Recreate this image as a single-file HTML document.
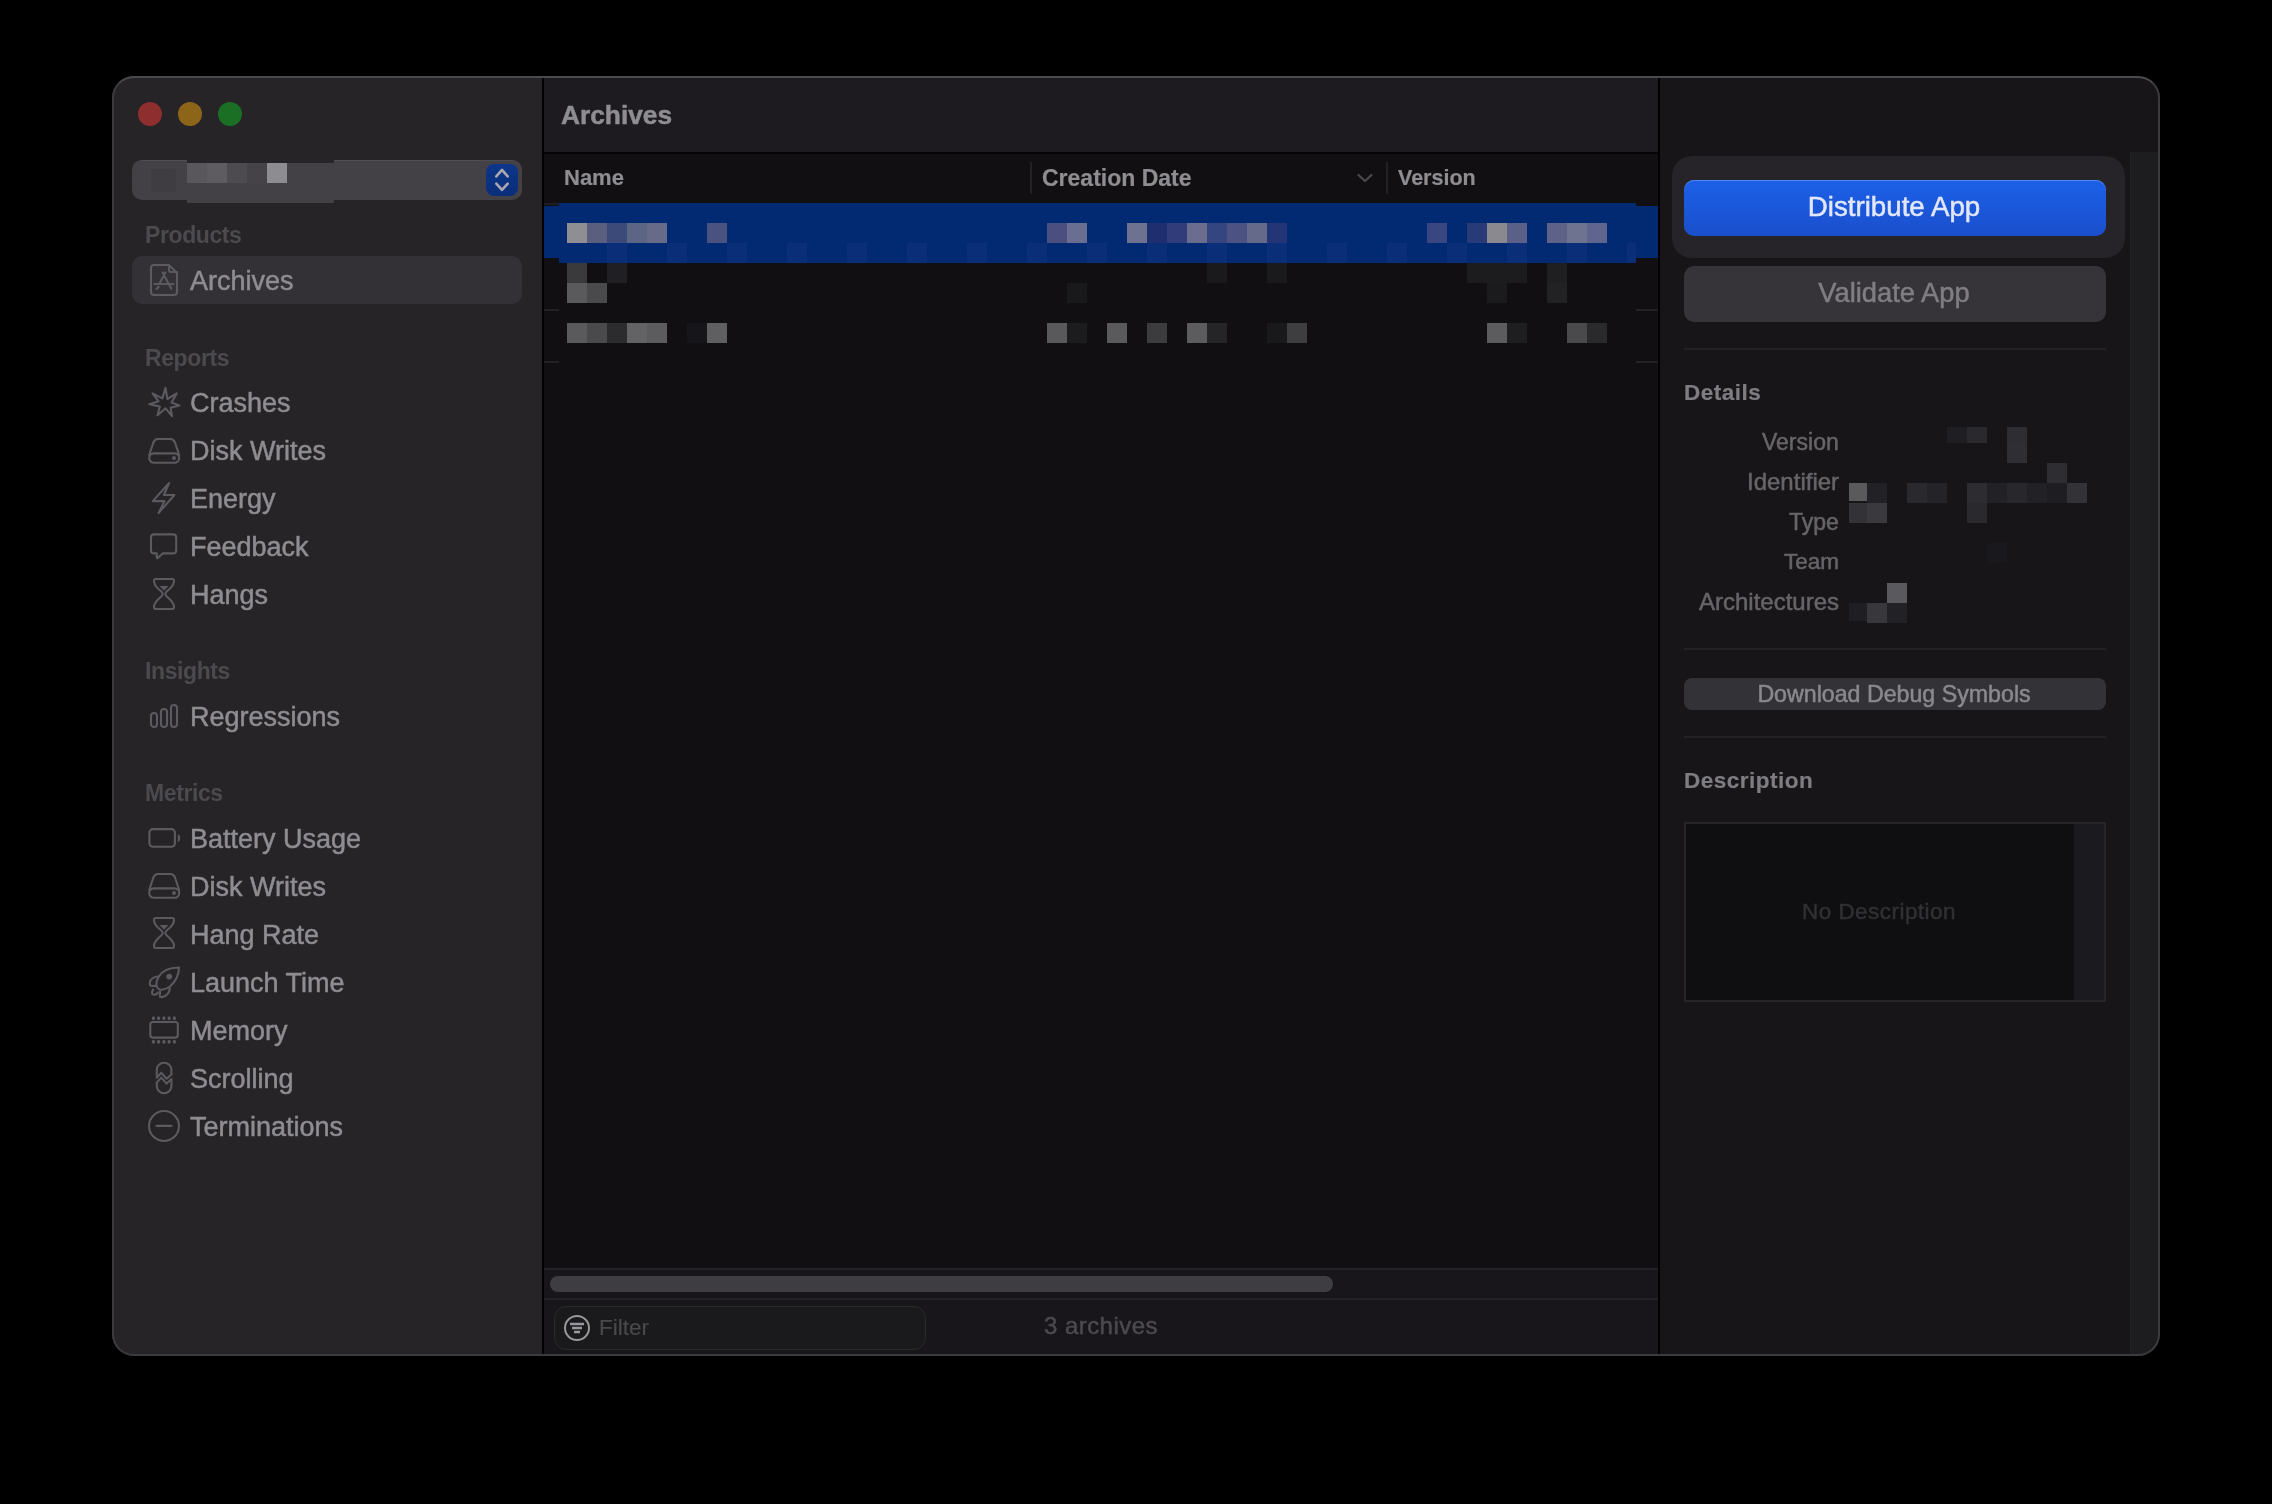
<!DOCTYPE html>
<html><head><meta charset="utf-8">
<style>
*{margin:0;padding:0;box-sizing:border-box}
html,body{width:2272px;height:1504px;background:#000;overflow:hidden;font-family:"Liberation Sans",sans-serif}
.t{position:absolute;white-space:nowrap;line-height:1;will-change:transform}
.r{position:absolute}
svg{position:absolute;overflow:visible}
#win{position:absolute;left:112px;top:76px;width:2048px;height:1280px;border-radius:22px;overflow:hidden;background:#171518}
#win > .inner{position:absolute;left:-112px;top:-76px;width:2272px;height:1504px}
</style></head><body>
<div id="win"><div class="inner">

<div class="r" style="left:112px;top:76px;width:430px;height:1280px;background:#262427;"></div>
<div class="r" style="left:542px;top:76px;width:2px;height:1280px;background:#000;"></div>
<div class="r" style="left:544px;top:76px;width:1114px;height:76px;background:#1d1b1f;"></div>
<div class="r" style="left:544px;top:152px;width:1114px;height:2px;background:#050507;"></div>
<div class="r" style="left:544px;top:154px;width:1114px;height:1114px;background:#110f12;"></div>
<div class="r" style="left:1658px;top:76px;width:2px;height:1280px;background:#000;"></div>
<div class="r" style="left:1660px;top:76px;width:500px;height:1280px;background:#171518;"></div>
<div class="r" style="left:2130px;top:152px;width:30px;height:1204px;background:#1d1c1f;"></div>
<div class="r" style="left:2130px;top:152px;width:1px;height:1204px;background:#222125;"></div>
<div class="r" style="left:138px;top:102px;width:24px;height:24px;border-radius:50%;background:#8f2e2e"></div>
<div class="r" style="left:178px;top:102px;width:24px;height:24px;border-radius:50%;background:#8d6519"></div>
<div class="r" style="left:218px;top:102px;width:24px;height:24px;border-radius:50%;background:#1a6f25"></div>
<div class="r" style="left:132px;top:160px;width:390px;height:40px;border-radius:10px;background:#434145;border-top:1px solid #4f4d52"></div>
<div class="r" style="left:151px;top:169px;width:25px;height:23px;background:#3f3d41;border-radius:2px"></div>
<div class="r" style="left:187px;top:160px;width:147px;height:3px;background:#262427;"></div>
<div class="r" style="left:187px;top:163px;width:147px;height:40px;background:#434145;"></div>
<div class="r" style="left:187px;top:163px;width:20px;height:20px;background:#59575b;"></div>
<div class="r" style="left:207px;top:163px;width:20px;height:20px;background:#5e5c60;"></div>
<div class="r" style="left:227px;top:163px;width:20px;height:20px;background:#4d4b4f;"></div>
<div class="r" style="left:247px;top:163px;width:20px;height:20px;background:#454347;"></div>
<div class="r" style="left:267px;top:163px;width:20px;height:20px;background:#8d8c90;"></div>
<div class="r" style="left:287px;top:163px;width:20px;height:20px;background:#434145;"></div>
<div class="r" style="left:307px;top:163px;width:20px;height:20px;background:#434145;"></div>
<div class="r" style="left:486px;top:164px;width:32px;height:32px;border-radius:8px;background:linear-gradient(#0d358a,#0a2e7a)"></div>
<svg style="left:486px;top:164px" width="32" height="32"><path d="M10.3 12.4 L16 5.9 L21.7 12.4 M10.3 19.6 L16 25.9 L21.7 19.6" fill="none" stroke="#aaa8b0" stroke-width="2.6" stroke-linecap="round" stroke-linejoin="round"/></svg>
<div class="t" style="left:145px;top:224.0px;font-size:23px;color:#4b4a4e;font-weight:700;letter-spacing:-0.4px;">Products</div>
<div class="r" style="left:132px;top:256px;width:390px;height:48px;border-radius:10px;background:#333136"></div>
<div class="t" style="left:145px;top:347.0px;font-size:23px;color:#4b4a4e;font-weight:700;letter-spacing:-0.4px;">Reports</div>
<div class="t" style="left:145px;top:660.0px;font-size:23px;color:#4b4a4e;font-weight:700;letter-spacing:-0.4px;">Insights</div>
<div class="t" style="left:145px;top:782.0px;font-size:23px;color:#4b4a4e;font-weight:700;letter-spacing:-0.4px;">Metrics</div>
<div class="t" style="left:190px;top:268.1px;font-size:27px;color:#8e8d92;font-weight:400;letter-spacing:0px;-webkit-text-stroke:0.5px #8e8d92;">Archives</div>
<svg style="left:148px;top:260px" width="34" height="40"><path d="M6 5 H21 L29 13 V32 Q29 35 26 35 H6 Q3 35 3 32 V8 Q3 5 6 5 Z M21 5 V10 Q21 12 23 12 H29" fill="none" stroke="#5b5a5f" stroke-width="2.1" stroke-linejoin="round" stroke-linecap="round"/><path d="M17.3 12.5 L11.6 23.5 M14.6 12.5 L23.2 28.6 M6.5 24 H25.5 M10.6 26.8 L8.6 29" fill="none" stroke="#5b5a5f" stroke-width="2.1" stroke-linejoin="round" stroke-linecap="round"/></svg>
<div class="t" style="left:190px;top:390.1px;font-size:27px;color:#8e8d92;font-weight:400;letter-spacing:0px;-webkit-text-stroke:0.5px #8e8d92;">Crashes</div>
<svg style="left:148px;top:382px" width="34" height="40"><polygon points="17.5,5.8 19.4,17 28.7,11.4 23.5,20.5 31.4,23.4 22.6,25.7 24,34.2 17.6,26.3 9.5,33.3 11.8,24.6 1.3,22.2 10.6,19.3 4.5,11.4 14.4,16.4" fill="none" stroke="#5b5a5f" stroke-width="2.1" stroke-linejoin="round" stroke-linecap="round"/></svg>
<div class="t" style="left:190px;top:438.1px;font-size:27px;color:#8e8d92;font-weight:400;letter-spacing:0px;-webkit-text-stroke:0.5px #8e8d92;">Disk Writes</div>
<svg style="left:148px;top:430px" width="34" height="40"><path d="M1.2 25 L5.4 12.5 Q6.8 9 10 9 H22.4 Q25.6 9 27 12.5 L31.2 25" fill="none" stroke="#5b5a5f" stroke-width="2.1" stroke-linejoin="round" stroke-linecap="round"/><rect x="1.2" y="23.4" width="30" height="9.4" rx="4.7" fill="none" stroke="#5b5a5f" stroke-width="2.1" stroke-linejoin="round" stroke-linecap="round"/><circle cx="26" cy="28.1" r="2" fill="#5b5a5f"/></svg>
<div class="t" style="left:190px;top:486.1px;font-size:27px;color:#8e8d92;font-weight:400;letter-spacing:0px;-webkit-text-stroke:0.5px #8e8d92;">Energy</div>
<svg style="left:148px;top:478px" width="34" height="40"><path d="M21.1 5 L4.8 23.1 H16.5 L10.6 35 L26.4 17 H15.9 Z" fill="none" stroke="#5b5a5f" stroke-width="2.1" stroke-linejoin="round" stroke-linecap="round"/></svg>
<div class="t" style="left:190px;top:534.1px;font-size:27px;color:#8e8d92;font-weight:400;letter-spacing:0px;-webkit-text-stroke:0.5px #8e8d92;">Feedback</div>
<svg style="left:148px;top:526px" width="34" height="40"><path d="M6 8.4 H25.2 Q28.2 8.4 28.2 11.4 V24.4 Q28.2 27.4 25.2 27.4 H14.7 L10 31.8 Q8.8 32.8 8.8 31 V27.4 H6 Q3 27.4 3 24.4 V11.4 Q3 8.4 6 8.4 Z" fill="none" stroke="#5b5a5f" stroke-width="2.1" stroke-linejoin="round" stroke-linecap="round"/></svg>
<div class="t" style="left:190px;top:582.1px;font-size:27px;color:#8e8d92;font-weight:400;letter-spacing:0px;-webkit-text-stroke:0.5px #8e8d92;">Hangs</div>
<svg style="left:148px;top:574px" width="34" height="40"><path d="M7.5 5 H24.5 Q26 5 26 7 Q26 11 21 15.5 Q17.3 18.5 17.3 20 Q17.3 21.5 21 24.5 Q26 29 26 33 Q26 35 24.5 35 H7.5 Q6 35 6 33 Q6 29 11 24.5 Q14.7 21.5 14.7 20 Q14.7 18.5 11 15.5 Q6 11 6 7 Q6 5 7.5 5 Z" fill="none" stroke="#5b5a5f" stroke-width="2.1" stroke-linejoin="round" stroke-linecap="round"/><path d="M11.6 12 H20.4 L16 16.8 Z" fill="#5b5a5f"/></svg>
<div class="t" style="left:190px;top:704.1px;font-size:27px;color:#8e8d92;font-weight:400;letter-spacing:0px;-webkit-text-stroke:0.5px #8e8d92;">Regressions</div>
<svg style="left:148px;top:695px" width="34" height="40"><rect x="3" y="18" width="6" height="14" rx="3" fill="none" stroke="#5b5a5f" stroke-width="2.1" stroke-linejoin="round" stroke-linecap="round"/><rect x="13" y="14" width="6" height="18" rx="3" fill="none" stroke="#5b5a5f" stroke-width="2.1" stroke-linejoin="round" stroke-linecap="round"/><rect x="23" y="10" width="6" height="22" rx="3" fill="none" stroke="#5b5a5f" stroke-width="2.1" stroke-linejoin="round" stroke-linecap="round"/></svg>
<div class="t" style="left:190px;top:826.1px;font-size:27px;color:#8e8d92;font-weight:400;letter-spacing:0px;-webkit-text-stroke:0.5px #8e8d92;">Battery Usage</div>
<svg style="left:148px;top:817px" width="34" height="40"><rect x="1.4" y="12.1" width="25.5" height="17.6" rx="3.5" fill="none" stroke="#5b5a5f" stroke-width="2.1" stroke-linejoin="round" stroke-linecap="round"/><path d="M29.9 17 Q32.2 18 32.2 21 Q32.2 24 29.9 25.1 Z" fill="#5b5a5f"/></svg>
<div class="t" style="left:190px;top:874.1px;font-size:27px;color:#8e8d92;font-weight:400;letter-spacing:0px;-webkit-text-stroke:0.5px #8e8d92;">Disk Writes</div>
<svg style="left:148px;top:865px" width="34" height="40"><path d="M1.2 25 L5.4 12.5 Q6.8 9 10 9 H22.4 Q25.6 9 27 12.5 L31.2 25" fill="none" stroke="#5b5a5f" stroke-width="2.1" stroke-linejoin="round" stroke-linecap="round"/><rect x="1.2" y="23.4" width="30" height="9.4" rx="4.7" fill="none" stroke="#5b5a5f" stroke-width="2.1" stroke-linejoin="round" stroke-linecap="round"/><circle cx="26" cy="28.1" r="2" fill="#5b5a5f"/></svg>
<div class="t" style="left:190px;top:922.1px;font-size:27px;color:#8e8d92;font-weight:400;letter-spacing:0px;-webkit-text-stroke:0.5px #8e8d92;">Hang Rate</div>
<svg style="left:148px;top:913px" width="34" height="40"><path d="M7.5 5 H24.5 Q26 5 26 7 Q26 11 21 15.5 Q17.3 18.5 17.3 20 Q17.3 21.5 21 24.5 Q26 29 26 33 Q26 35 24.5 35 H7.5 Q6 35 6 33 Q6 29 11 24.5 Q14.7 21.5 14.7 20 Q14.7 18.5 11 15.5 Q6 11 6 7 Q6 5 7.5 5 Z" fill="none" stroke="#5b5a5f" stroke-width="2.1" stroke-linejoin="round" stroke-linecap="round"/><path d="M11.6 12 H20.4 L16 16.8 Z" fill="#5b5a5f"/></svg>
<div class="t" style="left:190px;top:970.1px;font-size:27px;color:#8e8d92;font-weight:400;letter-spacing:0px;-webkit-text-stroke:0.5px #8e8d92;">Launch Time</div>
<svg style="left:148px;top:961px" width="34" height="40"><path d="M31 6.5 C22 6.5 14 10 10.5 16 C7.5 21 8 26 10 27.5 C12 29.5 17 29 22 25.5 C28 20 31 13 31 6.5 Z" fill="none" stroke="#5b5a5f" stroke-width="2.1" stroke-linejoin="round" stroke-linecap="round"/><circle cx="21.2" cy="15.6" r="2.9" fill="#5b5a5f"/><path d="M10.2 15.5 Q4.5 15.8 2.2 20 Q0.6 24.8 4 25 L8.2 24.8 M21.7 27 Q21.8 32 17 35 Q12.3 37.3 11.8 35 L12 30.2" fill="none" stroke="#5b5a5f" stroke-width="2.1" stroke-linejoin="round" stroke-linecap="round"/><path d="M5.2 28.6 Q2.6 32.4 5.4 33.6 Q8.2 34.2 9.8 31.6" fill="none" stroke="#5b5a5f" stroke-width="2.1" stroke-linejoin="round" stroke-linecap="round"/></svg>
<div class="t" style="left:190px;top:1018.1px;font-size:27px;color:#8e8d92;font-weight:400;letter-spacing:0px;-webkit-text-stroke:0.5px #8e8d92;">Memory</div>
<svg style="left:148px;top:1009px" width="34" height="40"><rect x="2.3" y="13" width="27.5" height="15.6" rx="2.5" fill="none" stroke="#5b5a5f" stroke-width="2.1" stroke-linejoin="round" stroke-linecap="round"/><rect x="3.9000000000000004" y="7.4" width="3" height="3.6" rx="1.2" fill="#5b5a5f"/><rect x="3.9000000000000004" y="31" width="3" height="3.6" rx="1.2" fill="#5b5a5f"/><rect x="9.1" y="7.4" width="3" height="3.6" rx="1.2" fill="#5b5a5f"/><rect x="9.1" y="31" width="3" height="3.6" rx="1.2" fill="#5b5a5f"/><rect x="14.4" y="7.4" width="3" height="3.6" rx="1.2" fill="#5b5a5f"/><rect x="14.4" y="31" width="3" height="3.6" rx="1.2" fill="#5b5a5f"/><rect x="19.6" y="7.4" width="3" height="3.6" rx="1.2" fill="#5b5a5f"/><rect x="19.6" y="31" width="3" height="3.6" rx="1.2" fill="#5b5a5f"/><rect x="24.9" y="7.4" width="3" height="3.6" rx="1.2" fill="#5b5a5f"/><rect x="24.9" y="31" width="3" height="3.6" rx="1.2" fill="#5b5a5f"/></svg>
<div class="t" style="left:190px;top:1066.1px;font-size:27px;color:#8e8d92;font-weight:400;letter-spacing:0px;-webkit-text-stroke:0.5px #8e8d92;">Scrolling</div>
<svg style="left:148px;top:1057px" width="34" height="40"><path d="M8.8 20.7 V13 A7.3 7.3 0 0 1 23.4 13 V17.5 L18.6 21.7 L13.3 15.6 Z" fill="none" stroke="#5b5a5f" stroke-width="2.1" stroke-linejoin="round" stroke-linecap="round"/><path d="M8.8 25.5 L13.3 20.6 L18.6 26.6 L23.4 22.2 V29 A7.3 7.3 0 0 1 8.8 29 Z" fill="none" stroke="#5b5a5f" stroke-width="2.1" stroke-linejoin="round" stroke-linecap="round"/></svg>
<div class="t" style="left:190px;top:1114.1px;font-size:27px;color:#8e8d92;font-weight:400;letter-spacing:0px;-webkit-text-stroke:0.5px #8e8d92;">Terminations</div>
<svg style="left:148px;top:1105px" width="34" height="40"><circle cx="16" cy="21" r="15" fill="none" stroke="#5b5a5f" stroke-width="2.1" stroke-linejoin="round" stroke-linecap="round"/><path d="M8.5 20.9 H23.5" fill="none" stroke="#5b5a5f" stroke-width="2.1" stroke-linejoin="round" stroke-linecap="round"/></svg>
<div class="t" style="left:561px;top:101.7px;font-size:26.3px;color:#8e8d91;font-weight:700;letter-spacing:0px;-webkit-text-stroke:0.5px #8e8d91;">Archives</div>
<div class="t" style="left:564px;top:167.4px;font-size:22px;color:#8e8d91;font-weight:700;letter-spacing:0px;-webkit-text-stroke:0.2px #8e8d91;">Name</div>
<div class="t" style="left:1042px;top:166.5px;font-size:23px;color:#8e8d91;font-weight:700;letter-spacing:0px;-webkit-text-stroke:0.2px #8e8d91;">Creation Date</div>
<div class="t" style="left:1398px;top:167.8px;font-size:21.5px;color:#8e8d91;font-weight:700;letter-spacing:0px;-webkit-text-stroke:0.2px #8e8d91;">Version</div>
<div class="r" style="left:1030px;top:162px;width:2px;height:32px;background:#222125;"></div>
<div class="r" style="left:1386px;top:162px;width:2px;height:32px;background:#222125;"></div>
<svg style="left:1356px;top:172px" width="20" height="12"><path d="M2.5 3 L9 9 L15.5 3" fill="none" stroke="#4a494d" stroke-width="2.2" stroke-linecap="round" stroke-linejoin="round"/></svg>
<div class="r" style="left:559px;top:203px;width:1077px;height:60px;background:#022a73;"></div>
<div class="r" style="left:544px;top:206px;width:15px;height:52px;background:#022a73;"></div>
<div class="r" style="left:1636px;top:206px;width:22px;height:52px;background:#022a73;"></div>
<div class="r" style="left:544px;top:203px;width:15px;height:2px;background:#1e1d21;"></div>
<div class="r" style="left:544px;top:309px;width:15px;height:2px;background:#222125;"></div>
<div class="r" style="left:1636px;top:309px;width:22px;height:2px;background:#222125;"></div>
<div class="r" style="left:544px;top:361px;width:15px;height:2px;background:#222125;"></div>
<div class="r" style="left:1636px;top:361px;width:22px;height:2px;background:#222125;"></div>
<div class="r" style="left:567px;top:223px;width:20px;height:20px;background:#8f8e93;"></div>
<div class="r" style="left:587px;top:223px;width:20px;height:20px;background:#5a5f80;"></div>
<div class="r" style="left:607px;top:223px;width:20px;height:20px;background:#3c4a7a;"></div>
<div class="r" style="left:627px;top:223px;width:20px;height:20px;background:#5c6584;"></div>
<div class="r" style="left:647px;top:223px;width:20px;height:20px;background:#676b87;"></div>
<div class="r" style="left:707px;top:223px;width:20px;height:20px;background:#4a5280;"></div>
<div class="r" style="left:1047px;top:223px;width:20px;height:20px;background:#4a4f80;"></div>
<div class="r" style="left:1067px;top:223px;width:20px;height:20px;background:#6a6e90;"></div>
<div class="r" style="left:1127px;top:223px;width:20px;height:20px;background:#6e7190;"></div>
<div class="r" style="left:1147px;top:223px;width:20px;height:20px;background:#1e2e6e;"></div>
<div class="r" style="left:1167px;top:223px;width:20px;height:20px;background:#303d7a;"></div>
<div class="r" style="left:1187px;top:223px;width:20px;height:20px;background:#6a6d8e;"></div>
<div class="r" style="left:1207px;top:223px;width:20px;height:20px;background:#354580;"></div>
<div class="r" style="left:1227px;top:223px;width:20px;height:20px;background:#4c5282;"></div>
<div class="r" style="left:1247px;top:223px;width:20px;height:20px;background:#666a8a;"></div>
<div class="r" style="left:1267px;top:223px;width:20px;height:20px;background:#233477;"></div>
<div class="r" style="left:1427px;top:223px;width:20px;height:20px;background:#3a4680;"></div>
<div class="r" style="left:1467px;top:223px;width:20px;height:20px;background:#283a78;"></div>
<div class="r" style="left:1487px;top:223px;width:20px;height:20px;background:#8a898f;"></div>
<div class="r" style="left:1507px;top:223px;width:20px;height:20px;background:#5a6088;"></div>
<div class="r" style="left:1547px;top:223px;width:20px;height:20px;background:#5e6288;"></div>
<div class="r" style="left:1567px;top:223px;width:20px;height:20px;background:#6e7490;"></div>
<div class="r" style="left:1587px;top:223px;width:20px;height:20px;background:#606590;"></div>
<div class="r" style="left:607px;top:243px;width:20px;height:20px;background:#0a2f78;"></div>
<div class="r" style="left:667px;top:243px;width:20px;height:20px;background:#0a2f78;"></div>
<div class="r" style="left:727px;top:243px;width:20px;height:20px;background:#0a2f78;"></div>
<div class="r" style="left:787px;top:243px;width:20px;height:20px;background:#0a2f78;"></div>
<div class="r" style="left:847px;top:243px;width:20px;height:20px;background:#0a2f78;"></div>
<div class="r" style="left:907px;top:243px;width:20px;height:20px;background:#0a2f78;"></div>
<div class="r" style="left:967px;top:243px;width:20px;height:20px;background:#0a2f78;"></div>
<div class="r" style="left:1027px;top:243px;width:20px;height:20px;background:#0a2f78;"></div>
<div class="r" style="left:1087px;top:243px;width:20px;height:20px;background:#0a2f78;"></div>
<div class="r" style="left:1147px;top:243px;width:20px;height:20px;background:#0a2f78;"></div>
<div class="r" style="left:1207px;top:243px;width:20px;height:20px;background:#0a2f78;"></div>
<div class="r" style="left:1267px;top:243px;width:20px;height:20px;background:#0a2f78;"></div>
<div class="r" style="left:1327px;top:243px;width:20px;height:20px;background:#0a2f78;"></div>
<div class="r" style="left:1387px;top:243px;width:20px;height:20px;background:#0a2f78;"></div>
<div class="r" style="left:1447px;top:243px;width:20px;height:20px;background:#0a2f78;"></div>
<div class="r" style="left:1507px;top:243px;width:20px;height:20px;background:#0a2f78;"></div>
<div class="r" style="left:1567px;top:243px;width:20px;height:20px;background:#0a2f78;"></div>
<div class="r" style="left:1627px;top:243px;width:9px;height:20px;background:#0a2f78;"></div>
<div class="r" style="left:567px;top:263px;width:20px;height:20px;background:#3a393c;"></div>
<div class="r" style="left:607px;top:263px;width:20px;height:20px;background:#201f23;"></div>
<div class="r" style="left:1207px;top:263px;width:20px;height:20px;background:#1a191c;"></div>
<div class="r" style="left:1267px;top:263px;width:20px;height:20px;background:#1a191c;"></div>
<div class="r" style="left:1467px;top:263px;width:20px;height:20px;background:#1c1b1e;"></div>
<div class="r" style="left:1487px;top:263px;width:20px;height:20px;background:#1c1b1e;"></div>
<div class="r" style="left:1507px;top:263px;width:20px;height:20px;background:#1c1b1e;"></div>
<div class="r" style="left:1547px;top:263px;width:20px;height:20px;background:#1f1e21;"></div>
<div class="r" style="left:567px;top:283px;width:20px;height:20px;background:#5a595c;"></div>
<div class="r" style="left:587px;top:283px;width:20px;height:20px;background:#4a494c;"></div>
<div class="r" style="left:1067px;top:283px;width:20px;height:20px;background:#19181b;"></div>
<div class="r" style="left:1487px;top:283px;width:20px;height:20px;background:#1b1a1d;"></div>
<div class="r" style="left:1547px;top:283px;width:20px;height:20px;background:#222124;"></div>
<div class="r" style="left:567px;top:323px;width:20px;height:20px;background:#5a595c;"></div>
<div class="r" style="left:587px;top:323px;width:20px;height:20px;background:#4a494c;"></div>
<div class="r" style="left:607px;top:323px;width:20px;height:20px;background:#2c2b2e;"></div>
<div class="r" style="left:627px;top:323px;width:20px;height:20px;background:#636265;"></div>
<div class="r" style="left:647px;top:323px;width:20px;height:20px;background:#5c5b5e;"></div>
<div class="r" style="left:687px;top:323px;width:20px;height:20px;background:#161519;"></div>
<div class="r" style="left:707px;top:323px;width:20px;height:20px;background:#5f5e61;"></div>
<div class="r" style="left:1047px;top:323px;width:20px;height:20px;background:#59585b;"></div>
<div class="r" style="left:1067px;top:323px;width:20px;height:20px;background:#1c1b1e;"></div>
<div class="r" style="left:1107px;top:323px;width:20px;height:20px;background:#5a595c;"></div>
<div class="r" style="left:1147px;top:323px;width:20px;height:20px;background:#3c3b3e;"></div>
<div class="r" style="left:1187px;top:323px;width:20px;height:20px;background:#5c5b5e;"></div>
<div class="r" style="left:1207px;top:323px;width:20px;height:20px;background:#252427;"></div>
<div class="r" style="left:1267px;top:323px;width:20px;height:20px;background:#19181b;"></div>
<div class="r" style="left:1287px;top:323px;width:20px;height:20px;background:#3e3d40;"></div>
<div class="r" style="left:1487px;top:323px;width:20px;height:20px;background:#5c5b5e;"></div>
<div class="r" style="left:1507px;top:323px;width:20px;height:20px;background:#1e1d20;"></div>
<div class="r" style="left:1567px;top:323px;width:20px;height:20px;background:#4a494c;"></div>
<div class="r" style="left:1587px;top:323px;width:20px;height:20px;background:#2a292c;"></div>
<div class="r" style="left:544px;top:1268px;width:1114px;height:88px;background:#18161a;"></div>
<div class="r" style="left:544px;top:1268px;width:1114px;height:2px;background:#232226;"></div>
<div class="r" style="left:544px;top:1298px;width:1114px;height:2px;background:#232226;"></div>
<div class="r" style="left:550px;top:1276px;width:783px;height:16px;border-radius:8px;background:#3e3d41"></div>
<div class="r" style="left:554px;top:1306px;width:372px;height:44px;border-radius:12px;background:#1a191c;border:1.5px solid #2a292d"></div>
<svg style="left:562px;top:1314px" width="30" height="30"><circle cx="15" cy="14" r="12" fill="none" stroke="#98979b" stroke-width="2"/><path d="M8 10 H22 M10 14 H20 M12 18 H18" stroke="#98979b" stroke-width="2.3"/></svg>
<div class="t" style="left:599px;top:1317.0px;font-size:22.5px;color:#49484c;font-weight:400;letter-spacing:0px;-webkit-text-stroke:0.2px #49484c;">Filter</div>
<div class="t" style="left:1044px;top:1313.7px;font-size:24px;color:#4b4a4e;font-weight:400;letter-spacing:0.45px;-webkit-text-stroke:0.5px #4b4a4e;">3 archives</div>
<div class="r" style="left:1672px;top:156px;width:453px;height:102px;border-radius:20px;background:#262428"></div>
<div class="r" style="left:1684px;top:180px;width:422px;height:56px;border-radius:10px;background:linear-gradient(#1c60e8,#1a4fcc);box-shadow:inset 0 1px 0 #4f86ee"></div>
<div class="t" style="left:1394px;width:1000px;text-align:center;top:192.6px;font-size:27.7px;color:#e2e7fb;font-weight:400;letter-spacing:0px;-webkit-text-stroke:0.5px #e2e7fb;">Distribute App</div>
<div class="r" style="left:1684px;top:266px;width:422px;height:56px;border-radius:10px;background:#363438"></div>
<div class="t" style="left:1394px;width:1000px;text-align:center;top:278.9px;font-size:27.3px;color:#7f7e83;font-weight:400;letter-spacing:0px;-webkit-text-stroke:0.5px #7f7e83;">Validate App</div>
<div class="r" style="left:1684px;top:348px;width:422px;height:2px;background:#222125;"></div>
<div class="t" style="left:1684px;top:381.5px;font-size:22.5px;color:#7e7d82;font-weight:700;letter-spacing:0.5px;-webkit-text-stroke:0.2px #7e7d82;">Details</div>
<div class="t" style="right:433px;top:430.5px;font-size:23px;color:#666569;font-weight:400;letter-spacing:0px;-webkit-text-stroke:0.5px #666569;">Version</div>
<div class="t" style="right:433px;top:469.7px;font-size:24px;color:#666569;font-weight:400;letter-spacing:0px;-webkit-text-stroke:0.5px #666569;">Identifier</div>
<div class="t" style="right:433px;top:510.5px;font-size:23px;color:#666569;font-weight:400;letter-spacing:0px;-webkit-text-stroke:0.5px #666569;">Type</div>
<div class="t" style="right:433px;top:551.0px;font-size:22.5px;color:#666569;font-weight:400;letter-spacing:0px;-webkit-text-stroke:0.5px #666569;">Team</div>
<div class="t" style="right:433px;top:589.7px;font-size:24px;color:#666569;font-weight:400;letter-spacing:0px;-webkit-text-stroke:0.5px #666569;">Architectures</div>
<div class="r" style="left:1947px;top:427px;width:20px;height:16px;background:#1f1e22;"></div>
<div class="r" style="left:1967px;top:427px;width:20px;height:16px;background:#2a292d;"></div>
<div class="r" style="left:2007px;top:427px;width:20px;height:16px;background:#2e2d31;"></div>
<div class="r" style="left:2007px;top:443px;width:20px;height:20px;background:#2f2e32;"></div>
<div class="r" style="left:2047px;top:463px;width:20px;height:20px;background:#2e2d31;"></div>
<div class="r" style="left:1849px;top:483px;width:18px;height:18px;background:#5a595c;"></div>
<div class="r" style="left:1867px;top:483px;width:20px;height:20px;background:#222125;"></div>
<div class="r" style="left:1907px;top:483px;width:20px;height:20px;background:#2a292d;"></div>
<div class="r" style="left:1927px;top:483px;width:20px;height:20px;background:#242327;"></div>
<div class="r" style="left:1967px;top:483px;width:20px;height:20px;background:#2d2c30;"></div>
<div class="r" style="left:1987px;top:483px;width:20px;height:20px;background:#222125;"></div>
<div class="r" style="left:2007px;top:483px;width:20px;height:20px;background:#28272b;"></div>
<div class="r" style="left:2027px;top:483px;width:20px;height:20px;background:#222125;"></div>
<div class="r" style="left:2047px;top:483px;width:20px;height:20px;background:#1e1d21;"></div>
<div class="r" style="left:2067px;top:483px;width:20px;height:20px;background:#333236;"></div>
<div class="r" style="left:1849px;top:503px;width:18px;height:20px;background:#333236;"></div>
<div class="r" style="left:1867px;top:503px;width:20px;height:20px;background:#3a393d;"></div>
<div class="r" style="left:1967px;top:503px;width:20px;height:20px;background:#2a292d;"></div>
<div class="r" style="left:1987px;top:543px;width:20px;height:20px;background:#19181c;"></div>
<div class="r" style="left:1887px;top:583px;width:20px;height:20px;background:#5a595d;"></div>
<div class="r" style="left:1849px;top:603px;width:18px;height:18px;background:#1f1e22;"></div>
<div class="r" style="left:1867px;top:603px;width:20px;height:20px;background:#38373b;"></div>
<div class="r" style="left:1887px;top:603px;width:20px;height:20px;background:#222125;"></div>
<div class="r" style="left:1684px;top:648px;width:422px;height:2px;background:#222125;"></div>
<div class="r" style="left:1684px;top:678px;width:422px;height:32px;border-radius:8px;background:#333236"></div>
<div class="t" style="left:1394px;width:1000px;text-align:center;top:683.4px;font-size:23.2px;color:#8a898e;font-weight:400;letter-spacing:0px;-webkit-text-stroke:0.5px #8a898e;">Download Debug Symbols</div>
<div class="r" style="left:1684px;top:736px;width:422px;height:2px;background:#222125;"></div>
<div class="t" style="left:1684px;top:769.5px;font-size:22.5px;color:#7e7d82;font-weight:700;letter-spacing:0.5px;-webkit-text-stroke:0.2px #7e7d82;">Description</div>
<div class="r" style="left:1684px;top:822px;width:422px;height:180px;background:#0f0e11;border:2px solid #262529"></div>
<div class="r" style="left:2074px;top:824px;width:30px;height:176px;background:#1b1a1e;"></div>
<div class="t" style="left:1379px;width:1000px;text-align:center;top:901.0px;font-size:22.5px;color:#313034;font-weight:400;letter-spacing:0.45px;-webkit-text-stroke:0.5px #313034;">No Description</div>
</div></div>
<div class="r" style="left:112px;top:76px;width:2048px;height:1280px;border-radius:22px;border:2px solid #3b3a3e;border-top-color:#4a494d"></div>
</body></html>
